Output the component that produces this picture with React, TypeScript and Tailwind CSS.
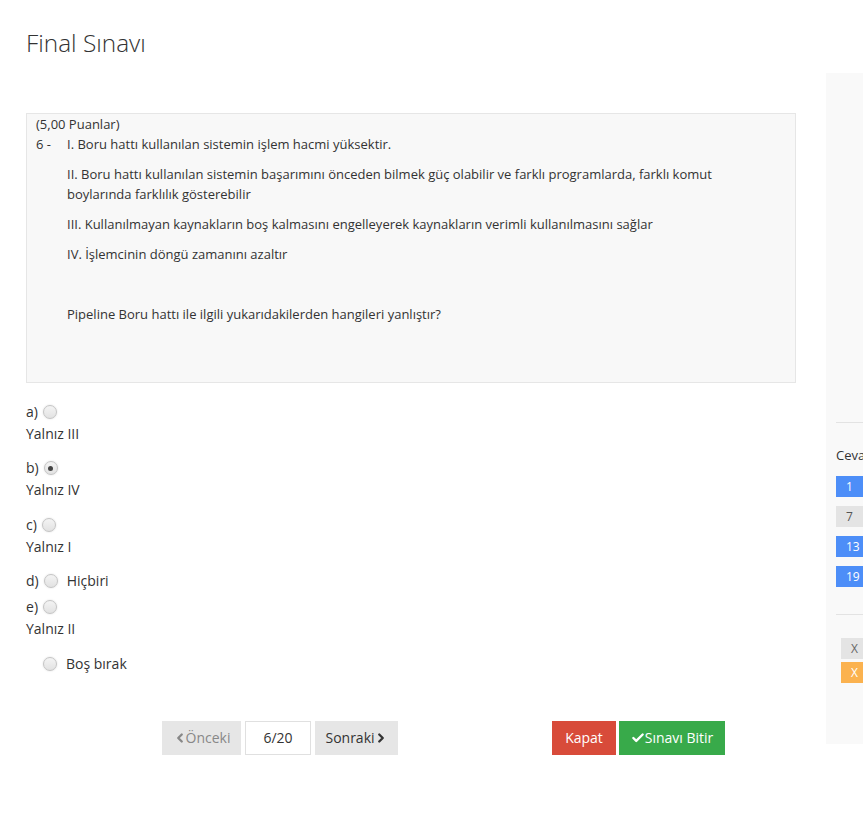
import { ChevronLeft, ChevronRight, Check } from "lucide-react"

const Radio = ({ checked = false }: { checked?: boolean }) => (
  <span className="inline-flex h-[14px] w-[14px] items-center justify-center rounded-full border border-[#c4c4c4] bg-gradient-to-b from-[#f4f4f4] to-[#e2e2e2] align-middle shadow-[0_0_2px_rgba(0,0,0,0.15)]">
    {checked && <span className="h-[5px] w-[5px] rounded-full bg-[#444]" />}
  </span>
)

const options = [
  { key: "a", text: "Yalnız III" },
  { key: "b", text: "Yalnız IV", checked: true },
  { key: "c", text: "Yalnız I" },
  { key: "d", text: "Hiçbiri", inline: true },
  { key: "e", text: "Yalnız II" },
]

const navItems = [
  { n: "1", cls: "bg-[#4d8ef8] text-white" },
  { n: "7", cls: "bg-[#e4e4e4] text-[#555]" },
  { n: "13", cls: "bg-[#4d8ef8] text-white" },
  { n: "19", cls: "bg-[#4d8ef8] text-white" },
]

export default function App() {
  return (
    <div className="w-[863px] h-[820px] overflow-hidden bg-white font-['Open_Sans',sans-serif] text-[#333]">
      <div className="pl-[26px] pt-[30px] h-[73px]">
        <h1 className="text-[24.4px] font-light leading-[26px] text-[#333]">Final Sınavı</h1>
      </div>

      <div className="flex">
        {/* soru alanı */}
        <div className="ml-[26px] w-[770px] shrink-0 pt-[40px]">
          <div className="h-[270px] border border-[#e6e6e6] bg-[#f8f8f8] px-[9px] text-[13px] leading-[20px]">
            <div className="leading-[19px] pt-[1px]">(5,00 Puanlar)</div>
            <div className="flex">
              <span className="w-[31px] shrink-0">6 -</span>
              <div className="w-[680px] space-y-[10px]">
                <p>I. Boru hattı kullanılan sistemin işlem hacmi yüksektir.</p>
                <p>
                  II. Boru hattı kullanılan sistemin başarımını önceden bilmek güç olabilir ve farklı programlarda, farklı komut
                  boylarında farklılık gösterebilir
                </p>
                <p>III. Kullanılmayan kaynakların boş kalmasını engelleyerek kaynakların verimli kullanılmasını sağlar</p>
                <p>IV. İşlemcinin döngü zamanını azaltır</p>
                <p>&nbsp;</p>
                <p>Pipeline Boru hattı ile ilgili yukarıdakilerden hangileri yanlıştır?</p>
              </div>
            </div>
          </div>

          {/* şıklar */}
          <div className="mt-[18px] text-[14px] leading-[22px]">
            {options.map((o) =>
              o.inline ? (
                <div key={o.key} className="mb-[4px] flex items-center">
                  <span>{o.key})</span>
                  <span className="ml-[5px] flex">
                    <Radio />
                  </span>
                  <span className="ml-[9px]">{o.text}</span>
                </div>
              ) : (
                <div key={o.key} className="mb-[12.4px]">
                  <div className="flex items-center">
                    <span>{o.key})</span>
                    <span className="ml-[5px] flex">
                      <Radio checked={o.checked} />
                    </span>
                  </div>
                  <div>{o.text}</div>
                </div>
              )
            )}
            <div className="mt-[1px] flex items-center pl-[17px]">
              <Radio />
              <span className="ml-[9px]">Boş bırak</span>
            </div>
          </div>

          {/* butonlar */}
          <div className="mt-[46px] flex text-[14px]">
            <div className="ml-[136px] flex gap-[4px]">
              <button className="flex h-[34px] w-[79px] items-center justify-center bg-[#e6e6e6] text-[#888]">
                <ChevronLeft className="h-[14px] w-[14px] -mr-[1px]" strokeWidth={4} />
                Önceki
              </button>
              <div className="flex h-[34px] w-[66px] items-center justify-center border border-[#e0e0e0] bg-white">6/20</div>
              <button className="flex h-[34px] w-[83px] items-center justify-center bg-[#e6e6e6] text-[#333]">
                Sonraki
                <ChevronRight className="h-[14px] w-[14px] -ml-[1px]" strokeWidth={4} />
              </button>
            </div>
            <div className="ml-[154px] flex gap-[3px]">
              <button className="h-[34px] w-[64px] bg-[#d84b3a] text-white">Kapat</button>
              <button className="flex h-[34px] w-[106px] items-center justify-center bg-[#38aa4a] text-white">
                <Check className="h-[14px] w-[14px]" strokeWidth={4} />
                Sınavı Bitir
              </button>
            </div>
          </div>
        </div>

        {/* yan panel */}
        <div className="ml-[30px] h-[671px] w-[240px] shrink-0 bg-[#f9f9f9] pl-[10px]">
          <div className="h-[350px] border-b border-[#e3e3e3]" />
          <div className="mt-[22px] text-[13px] leading-[20px]">Cevap Durumu</div>
          <div className="mt-[11px] flex flex-col gap-[9px] text-[12px]">
            {navItems.map((b) => (
              <div key={b.n} className="flex gap-[4px]">
                <span className={`${b.cls} flex h-[21px] min-w-[30px] items-center pl-[10px] pr-[8px]`}>{b.n}</span>
              </div>
            ))}
          </div>
          <div className="mt-[27px] border-b border-[#e3e3e3]" />
          <div className="mt-[23px] flex flex-col gap-[3px] pl-[5px] text-[12px]">
            <span className="flex h-[21px] w-[30px] items-center pl-[10px] bg-[#e4e4e4] text-[#666]">X</span>
            <span className="flex h-[21px] w-[30px] items-center pl-[10px] bg-[#fbb24f] text-white">X</span>
          </div>
        </div>
      </div>
    </div>
  )
}
